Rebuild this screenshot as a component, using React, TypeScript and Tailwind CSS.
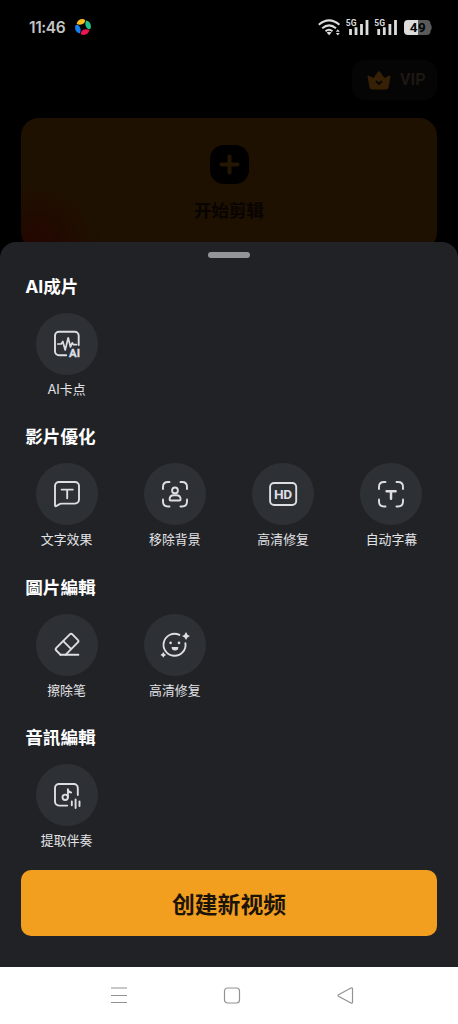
import React from 'react';

type Tool = { id: string; label: string; icon: React.ReactNode };
type Section = { title: string; tools: Tool[] };

const ScanCorners = () => (
  <path d="M19 26V24q0-5 5-5h1.5M36.5 19H38q5 0 5 5v2M43 36.5v2q0 5-5 5h-1.5M25.5 43.5H24q-5 0-5-5v-2" />
);

const SECTIONS: Section[] = [
  {
    title: 'AI成片',
    tools: [
      {
        id: 'beat',
        label: 'AI卡点',
        icon: (
          <>
            <path d="M42.7 32V22.7a4 4 0 0 0-4-4H23a4 4 0 0 0-4 4v15.6a4 4 0 0 0 4 4h7.2" />
            <path strokeWidth="1.7" d="M21.8 31h3.4l1.6-2.5 2.4 8.5 3-12.2 2.3 9.2 1.7-4.2 1.3 1.9h3" />
            <text className="font-[Roboto,sans-serif]" x="33.1" y="44" fontSize="11.4" fontWeight="700" fill="currentColor" stroke="currentColor" strokeWidth="0.3">AI</text>
          </>
        ),
      },
    ],
  },
  {
    title: '影片優化',
    tools: [
      {
        id: 'text',
        label: '文字效果',
        icon: (
          <>
            <path d="M19 42.2V23a4 4 0 0 1 4-4h16a4 4 0 0 1 4 4v13.6a4 4 0 0 1-4 4H25.6q-1.5 0-2.6.8l-2.5 1.6q-1.5.7-1.5-.8z" />
            <path d="M25.6 26.6h11.2M31.2 26.6v8.6" />
          </>
        ),
      },
      {
        id: 'cutout',
        label: '移除背景',
        icon: (
          <>
            <ScanCorners />
            <circle cx="31" cy="27.4" r="2.9" />
            <path d="M25.6 36.4q0-4.2 4.2-4.2h2.6q4.2 0 4.2 4.2 0 1.1-1.1 1.1h-8.8q-1.1 0-1.1-1.1z" />
          </>
        ),
      },
      {
        id: 'hd',
        label: '高清修复',
        icon: (
          <>
            <rect x="18.1" y="20" width="26.1" height="22" rx="4" />
            <text className="font-[Roboto,sans-serif]" x="21.9" y="35.9" textLength="18.2" fontSize="13.7" fontWeight="700" fill="currentColor" stroke="none">HD</text>
          </>
        ),
      },
      {
        id: 'caption',
        label: '自动字幕',
        icon: (
          <>
            <ScanCorners />
            <path strokeWidth="2.5" d="M26.6 28.2h9M31 28.2v7.6" />
          </>
        ),
      },
    ],
  },
  {
    title: '圖片編輯',
    tools: [
      {
        id: 'eraser',
        label: '擦除笔',
        icon: (
          <>
            <path d="M24.6 40.8l-4.3-4.3q-1.3-1.3 0-2.6L33.8 20.4q1.3-1.3 2.6 0l5.4 5.4q1.3 1.3 0 2.6L29.5 40.8" />
            <path d="M27.3 27.2l7.7 7.7M24.4 40.8h18" />
          </>
        ),
      },
      {
        id: 'retouch',
        label: '高清修复',
        icon: (
          <>
            <path d="M35.4 20.9a11 11 0 1 0 6 8.2" />
            <g fill="currentColor" stroke="none">
              <path d="M42 17.9q.9 3.1 4 4-3.1.9-4 4-.9-3.1-4-4 3.1-.9 4-4zM19.3 38q.7 2.2 2.9 2.9-2.2.7-2.9 2.9-.7-2.2-2.9-2.9 2.2-.7 2.9-2.9z" />
              <circle cx="26.6" cy="28.9" r="1.3" />
              <circle cx="35" cy="28.9" r="1.3" />
              <path d="M27.6 33h6.8q0 3.6-3.4 3.6T27.6 33z" />
            </g>
          </>
        ),
      },
    ],
  },
  {
    title: '音訊編輯',
    tools: [
      {
        id: 'extract',
        label: '提取伴奏',
        icon: (
          <>
            <path d="M41.8 31V24a4 4 0 0 0-4-4H23a4 4 0 0 0-4 4v13.6a4 4 0 0 0 4 4h8.2" />
            <circle cx="29.2" cy="33.3" r="2.7" />
            <path d="M31.9 33.3v-8q.3 2.6 3.2 3.2M35.8 37.4v3.8M39.6 35.4v8.6M43.5 37.4v4.6" />
          </>
        ),
      },
    ],
  },
];

function StatusBar() {
  return (
    <header className="flex h-[54px] items-center pl-[29px] pr-[24px]">
      <span className="pt-px text-[15.5px] font-semibold tracking-[-0.4px] text-[#c4c4c4]">11:46</span>
      <svg className="ml-2.5 size-4" viewBox="0 0 16 16">
        <path fill="#f9bd1c" d="M1.6 5Q3-.6 9 .2q2.400 1.300 0 4Q6 6.600 1.600 5z" />
        <path fill="#24c08c" d="M11 1.600Q16.600 3 15.800 9q-1.300 2.400-4 0Q9.400 6 11 1.600z" />
        <path fill="#ee1550" d="M14.400 11Q13 16.600 7 15.800q-2.400-1.300 0-4Q10 9.400 14.400 11z" />
        <path fill="#1681ee" d="M5 14.400Q-.6 13 .2 7q1.300-2.400 4 0Q6.600 10 5 14.400z" />
      </svg>
      <svg className="ml-auto h-5 w-[116px] font-[Roboto,sans-serif]" viewBox="318 17 116 20" fill="none" stroke="#dcdcdc">
        <path strokeWidth="2" d="M318.8 24.7q10.3-8.6 20.6 0M322.2 28.2q6.9-5.6 13.8 0M325.5 31.2q3.5-2.8 7 0" />
        <path fill="#dcdcdc" stroke="none" d="M326.6 32.5q2.5-1.6 5 0l-2.5 2.7zM335.8 31.7l2-2.5 2 2.5zM335.8 32.9l2 2.5 2-2.5z" />
        <path strokeWidth="2.8" d="M350.5 29v6M356 27.3v7.7M361.5 24v11M367 20v15M378.7 29v6M384.3 27.3v7.7M389.9 24v11M395.5 20v15" />
        <g fill="#dcdcdc" stroke="none" fontSize="8.5" fontWeight="700">
          <text x="345.8" y="26">5G</text>
          <text x="374.3" y="26">5G</text>
        </g>
        <path fill="#5a5a5a" stroke="none" d="M417 20h9.5a4 4 0 0 1 4 4q2.5 3.5 0 7a4 4 0 0 1-4 4H417z" />
        <path fill="#dcdcdc" stroke="none" d="M418 20h-10a4 4 0 0 0-4 4v7a4 4 0 0 0 4 4h10z" />
        <text x="409.7" y="32.3" textLength="16" fontSize="13.5" fontWeight="700" fill="#050505" stroke="none">49</text>
      </svg>
    </header>
  );
}

function Home() {
  return (
    <main className="flex flex-col px-[21px] pt-[6px]">
      <div className="flex h-10 w-[85px] items-center self-end rounded-[13px] bg-[#050506] pl-[15px]">
        <svg className="h-[19px] w-6" viewBox="0 0 24 19">
          <path fill="#362107" d="M.5 5.5q0-1.5 1.5-.8l4.500 2.400L10.700 1q1.300-1.500 2.600 0l4.200 6.100L22 4.700q1.500-.7 1.500.8l-2 11q-.4 2-2.500 2H5q-2.100 0-2.500-2z" />
          <path fill="none" stroke="#0a0602" strokeWidth="1.8" d="M9 10l3 3 3-3" />
        </svg>
        <span className="ml-[9px] font-[Roboto,sans-serif] text-[16px] font-bold text-[#1d1812]">VIP</span>
      </div>
      <section className="mt-[18px] flex h-[132px] flex-col items-center rounded-[18px] bg-[radial-gradient(circle_at_3%_100%,#240400_0%,#1e1101_16%)] pt-[27px]">
        <svg className="size-[39px]" viewBox="0 0 39 39">
          <rect width="39" height="39" rx="14" fill="#000" />
          <path d="M19.5 11.5v16M11.5 19.5h16" stroke="#251602" strokeWidth="4" strokeLinecap="round" />
        </svg>
        <h1 className="mt-[14px] text-[17.5px] leading-[26px] font-bold text-[#080401]">开始剪辑</h1>
      </section>
    </main>
  );
}

function ToolItem({ tool }: { tool: Tool }) {
  return (
    <button className="flex flex-col items-center">
      <svg
        className="size-[62px] rounded-full bg-[#2d3035] text-[#dcdee3]"
        viewBox="0 0 62 62"
        fill="none"
        stroke="currentColor"
        strokeWidth="1.9"
        strokeLinecap="round"
        strokeLinejoin="round"
      >
        {tool.icon}
      </svg>
      <span className="mt-[5px] text-[12.9px] leading-5 text-[#e2e3e5]">{tool.label}</span>
    </button>
  );
}

function ToolSheet() {
  return (
    <div className="relative -mt-2 flex h-[725px] flex-col rounded-t-[16px] bg-[#212226] pt-[10px]">
      <div className="h-[6px] w-[42px] self-center rounded-full bg-[#949598]" />
      {SECTIONS.map((section) => (
        <section key={section.title} className="h-[150.4px] shrink-0 px-[12.4px] pt-[16px]">
          <h2 className="pl-[12.8px] text-[17.6px] leading-[26px] font-bold text-white">{section.title}</h2>
          <div className="mt-[13px] grid grid-cols-4">
            {section.tools.map((tool) => (
              <ToolItem key={tool.id} tool={tool} />
            ))}
          </div>
        </section>
      ))}
      <button className="mx-[21px] mt-[10.6px] h-[66px] shrink-0 rounded-[10px] bg-[#f29f20] pt-[3px] text-[22.8px] font-bold text-[#1d1408]">
        创建新视频
      </button>
    </div>
  );
}

function NavBar() {
  return (
    <nav className="flex h-[57px] items-center justify-between bg-white pb-[2px] pl-[110px] pr-[104px]">
      <svg className="size-[18px]" viewBox="0 0 18 18" fill="none" stroke="#929292" strokeWidth="1.2">
        <path d="M1 2h16M1 9.5h16M1 16.5h16" />
      </svg>
      <svg className="size-[18px]" viewBox="0 0 18 18" fill="none" stroke="#929292" strokeWidth="1.2">
        <rect x="1.5" y="2" width="15" height="15" rx="3" />
      </svg>
      <svg className="size-[18px]" viewBox="0 0 18 18" fill="none" stroke="#929292" strokeWidth="1.2">
        <path d="M2.5 8.7L15 2q1.5-.6 1.5 1v13q0 1.6-1.5 1L2.5 10.3q-1-.8 0-1.6z" />
      </svg>
    </nav>
  );
}

export default function App() {
  return (
    <div className="flex h-[1024px] w-[458px] flex-col overflow-hidden bg-black font-[Inter,'Noto_Sans_CJK_SC',sans-serif]">
      <StatusBar />
      <Home />
      <ToolSheet />
      <NavBar />
    </div>
  );
}
